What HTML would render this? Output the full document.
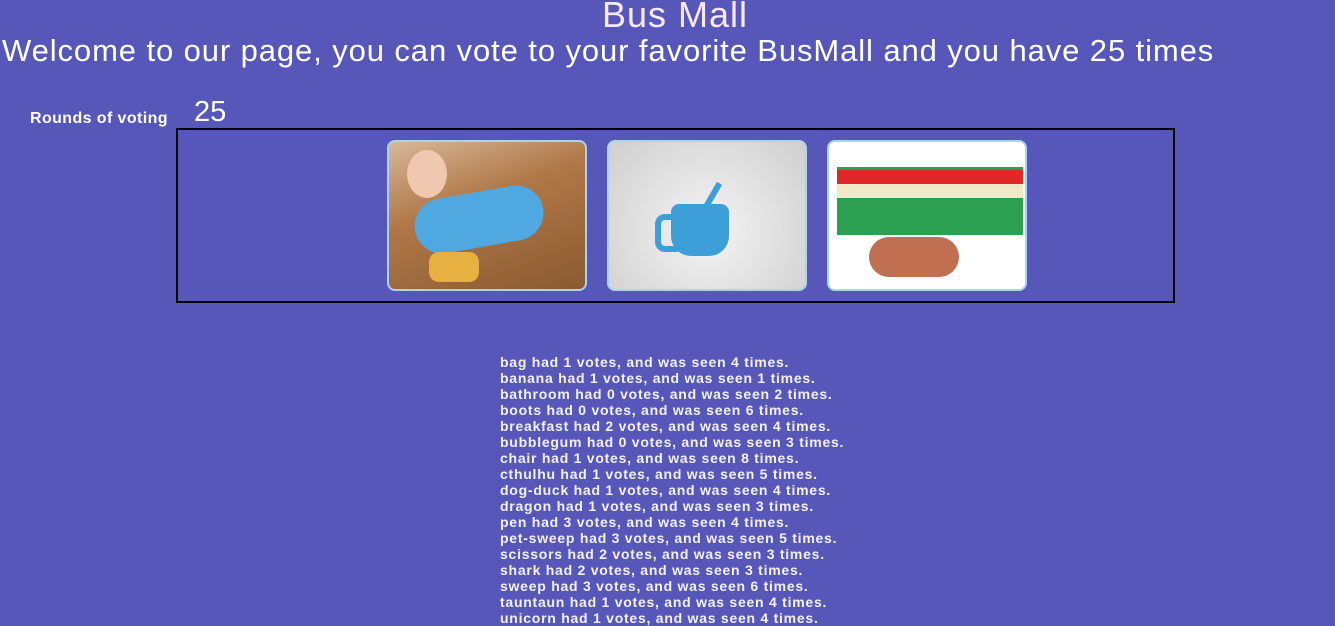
<!DOCTYPE html>
<html><head><style>
body{margin:0;width:1335px;height:616px;overflow:hidden;background:#5757b9;font-family:"Liberation Sans",sans-serif;color:#fff;position:relative}
.a{position:absolute;white-space:nowrap}
.box{position:absolute;left:176px;top:128px;width:995px;height:171px;border:2px solid #000}
.img{position:absolute;top:140px;width:196px;height:147px;border:2px solid #a8d4f0;border-radius:8px;overflow:hidden}
.list{position:absolute;left:500px;top:354px;font-size:14px;font-weight:bold;line-height:16px;color:#f4f0ff;letter-spacing:0.75px}
</style></head><body>
<div class="a" style="left:0;width:1350px;text-align:center;top:-6px;font-size:36px;color:#f8e8f8;letter-spacing:1px">Bus Mall</div>
<div class="a" style="left:2px;top:33px;font-size:31px;letter-spacing:0.9px">Welcome to our page, you can vote to your favorite BusMall and you have 25 times</div>
<div class="a" style="left:30px;top:110px;font-size:16px;font-weight:bold;letter-spacing:0.4px">Rounds of voting</div>
<div class="a" style="left:194px;top:96px;font-size:29px">25</div>
<div class="box"></div>
<div class="img" style="left:387px;background:linear-gradient(160deg,#d8b898 0%,#b07848 40%,#8a5a30 100%)">
 <div style="position:absolute;left:18px;top:8px;width:40px;height:48px;border-radius:50%;background:#f0c8b0"></div>
 <div style="position:absolute;left:25px;top:50px;width:130px;height:55px;border-radius:30px;background:#4fa8e0;transform:rotate(-10deg)"></div>
 <div style="position:absolute;left:40px;top:110px;width:50px;height:30px;border-radius:10px;background:#e8b040"></div>
</div>
<div class="img" style="left:607px;background:radial-gradient(circle at 50% 60%,#f4f4f4,#cfcfcf)">
 <div style="position:absolute;left:62px;top:62px;width:58px;height:52px;border-radius:8px 8px 20px 20px;background:#3d9ed8"></div>
 <div style="position:absolute;left:46px;top:72px;width:18px;height:26px;border:6px solid #3d9ed8;border-radius:10px"></div>
 <div style="position:absolute;left:95px;top:38px;width:6px;height:50px;background:#3d9ed8;transform:rotate(30deg)"></div>
</div>
<div class="img" style="left:827px;background:#fff">
 <div style="position:absolute;left:8px;top:25px;width:186px;height:68px;background:#2aa050"></div>
 <div style="position:absolute;left:8px;top:28px;width:186px;height:14px;background:#e02828"></div>
 <div style="position:absolute;left:8px;top:42px;width:186px;height:14px;background:#f0e8c8"></div>
 <div style="position:absolute;left:40px;top:95px;width:90px;height:40px;border-radius:20px;background:#c07050"></div>
</div>
<div class="list">bag had 1 votes, and was seen 4 times.<br>banana had 1 votes, and was seen 1 times.<br>bathroom had 0 votes, and was seen 2 times.<br>boots had 0 votes, and was seen 6 times.<br>breakfast had 2 votes, and was seen 4 times.<br>bubblegum had 0 votes, and was seen 3 times.<br>chair had 1 votes, and was seen 8 times.<br>cthulhu had 1 votes, and was seen 5 times.<br>dog-duck had 1 votes, and was seen 4 times.<br>dragon had 1 votes, and was seen 3 times.<br>pen had 3 votes, and was seen 4 times.<br>pet-sweep had 3 votes, and was seen 5 times.<br>scissors had 2 votes, and was seen 3 times.<br>shark had 2 votes, and was seen 3 times.<br>sweep had 3 votes, and was seen 6 times.<br>tauntaun had 1 votes, and was seen 4 times.<br>unicorn had 1 votes, and was seen 4 times.</div>
</body></html>
